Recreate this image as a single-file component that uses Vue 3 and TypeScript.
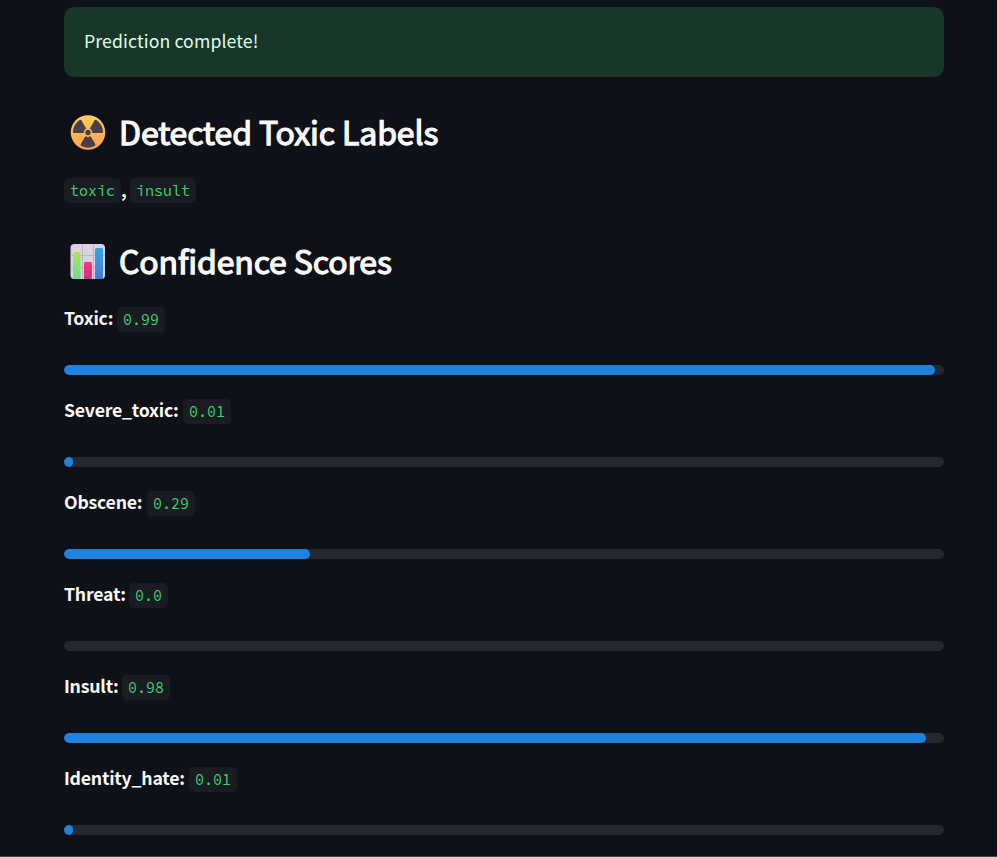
<script setup lang="ts">
interface Score {
  name: string
  value: string
  percent: number
  labelWidth: number
}

const labels: string[] = ['toxic', 'insult']

const scores: Score[] = [
  { name: 'Toxic', value: '0.99', percent: 99, labelWidth: 49 },
  { name: 'Severe_toxic', value: '0.01', percent: 1, labelWidth: 115 },
  { name: 'Obscene', value: '0.29', percent: 28, labelWidth: 79 },
  { name: 'Threat', value: '0.0', percent: 0, labelWidth: 61 },
  { name: 'Insult', value: '0.98', percent: 98, labelWidth: 54 },
  { name: 'Identity_hate', value: '0.01', percent: 1, labelWidth: 121 },
]
</script>

<template>
  <main class="page">
    <div class="alert">Prediction complete!</div>

    <h2 class="heading">
      <svg class="emoji" viewBox="0 0 36 36" aria-hidden="true">
        <defs>
          <linearGradient id="sun" x1="0" y1="0" x2="0" y2="1">
            <stop offset="0" stop-color="#ffce55" />
            <stop offset="1" stop-color="#ff9f50" />
          </linearGradient>
        </defs>
        <circle cx="18" cy="17.500" r="17.300" fill="url(#sun)" />
        <g fill="#483f4e">
          <circle cx="18" cy="17.500" r="2.700" />
          <path id="blade" d="M15.400 21.200L10.700 29.300Q10.200 30.500 11.300 31.100Q18 34.300 24.700 31.100Q25.800 30.500 25.300 29.300L20.600 21.200Q18 22.700 15.400 21.200Z" />
          <use href="#blade" transform="rotate(120 18 17.5)" />
          <use href="#blade" transform="rotate(240 18 17.5)" />
        </g>
      </svg>
      <span class="title">Detected Toxic Labels</span>
    </h2>

    <p class="labels">
      <template v-for="(label, i) in labels" :key="label">
        <span v-if="i > 0" class="comma">,</span>
        <code class="chip">{{ label }}</code>
      </template>
    </p>

    <h2 class="heading second">
      <svg class="emoji" viewBox="0 0 36 36" aria-hidden="true">
        <defs>
          <linearGradient id="green" x1="0" y1="0" x2="0" y2="1">
            <stop offset="0" stop-color="#b0e35a" />
            <stop offset="1" stop-color="#62df91" />
          </linearGradient>
          <linearGradient id="pink" x1="0" y1="0" x2="0" y2="1">
            <stop offset="0" stop-color="#f83a78" />
            <stop offset="1" stop-color="#d42d82" />
          </linearGradient>
          <linearGradient id="blue" x1="0" y1="0" x2="0" y2="1">
            <stop offset="0" stop-color="#35a5ed" />
            <stop offset="1" stop-color="#417cd1" />
          </linearGradient>
        </defs>
        <rect x="0.5" y="0" width="34.5" height="35" rx="4" fill="#dcd3e2" />
        <path d="M12.500 0V35M23.500 0V35M0.500 11.500H35M0.500 23.500H35" stroke="#bdb3c5" stroke-width="1" />
        <path d="M3 9.500Q3 8 4.500 8H9Q10.500 8 10.500 9.500V35H4.500Q3 35 3 33.500Z" fill="url(#green)" />
        <path d="M14 19.500Q14 18 15.500 18H20.500Q22 18 22 19.500V35H14Z" fill="url(#pink)" />
        <path d="M25 5.500Q25 4 26.500 4H31.500Q33 4 33 5.500V35H25Z" fill="url(#blue)" />
      </svg>
      <span class="title">Confidence Scores</span>
    </h2>

    <section v-for="score in scores" :key="score.name" class="score">
      <div class="score-line">
        <strong class="name" :style="{ width: score.labelWidth + 'px' }">{{ score.name }}:</strong>
        <code class="chip">{{ score.value }}</code>
      </div>
      <div class="track">
        <div class="fill" :style="{ width: score.percent + '%' }"></div>
      </div>
    </section>
  </main>
</template>

<style>
body {
  background: #0e1117;
}
</style>

<style scoped>
.page {
  box-sizing: border-box;
  height: 857px;
  padding: 7px 53px 0 64px;
  overflow: hidden;
  border-bottom: 1px solid #444348;
  background: #0e1117;
  color: #fafafa;
  font-family: "Source Sans Pro", "Noto Sans CJK SC", sans-serif;
  font-size: 17.7px;
}

.alert {
  box-sizing: border-box;
  height: 70px;
  padding: 0 20px;
  border-radius: 10px;
  background: #193728;
  color: #dffde9;
  letter-spacing: 0.1px;
  line-height: 67px;
}

.heading {
  display: flex;
  align-items: center;
  height: 48px;
  margin: 32px 0 0;
  padding-left: 6px;
}

.emoji {
  flex: none;
  width: 36px;
  height: 36px;
}

.title {
  height: 48px;
  margin-left: 13px;
  font-size: 32px;
  font-weight: 400;
  letter-spacing: -0.12px;
  line-height: 44px;
  white-space: nowrap;
  -webkit-text-stroke: 1.25px currentColor;
}

.labels {
  display: flex;
  height: 25px;
  margin: 21px 0 0;
}

.comma {
  width: 9px;
  font-weight: 700;
  line-height: 22px;
}

.chip {
  box-sizing: border-box;
  height: 25px;
  padding: 0 6px;
  border-radius: 5px;
  background: #1a1c24;
  color: #3dd56d;
  font-family: "Source Code Pro", "Liberation Mono", monospace;
  font-size: 15px;
  line-height: 26px;
}

.second {
  margin-top: 35px;
}

.score {
  height: 92px;
}

.second + .score {
  margin-top: 21px;
}

.score-line {
  display: flex;
  gap: 4px;
  height: 25px;
}

.name {
  font-weight: 700;
  letter-spacing: -0.22px;
  line-height: 20px;
  white-space: nowrap;
}

.track {
  height: 10px;
  margin-top: 33px;
  overflow: hidden;
  border-radius: 5px;
  background: #262730;
}

.fill {
  height: 10px;
  border-radius: 5px;
  background: #1c83e1;
}
</style>
